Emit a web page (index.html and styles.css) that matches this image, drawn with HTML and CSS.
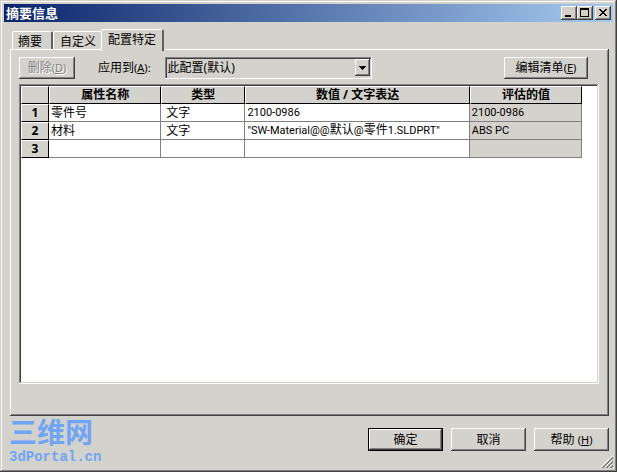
FILE: index.html
```html
<!DOCTYPE html>
<html lang="zh-CN">
<head>
    <meta charset="UTF-8">
    <meta name="viewport" content="width=device-width, initial-scale=1.0">
    <title>摘要信息</title>
    <link rel="stylesheet" href="styles.css">
</head>
<body>

    <div class="window">
        <!-- TITLE BAR -->
        <header class="titlebar">
            <h1>摘要信息</h1>
            <button class="title-btn" aria-label="最小化">
                <svg width="12" height="10" shape-rendering="crispEdges"><path d="M2 7h6v2H2z"/></svg>
            </button>
            <button class="title-btn" aria-label="最大化">
                <svg width="12" height="10" shape-rendering="crispEdges"><path d="M1 0h9v9H1zM2 2v6h7V2z" fill-rule="evenodd"/></svg>
            </button>
            <button class="title-btn close-btn" aria-label="关闭">
                <svg width="12" height="10" shape-rendering="crispEdges"><path d="M2 1h2v1h1v1h2V2h1V1h2v1H9v1H8v1H7v1h1v1h1v1h1v1H8V7H7V6H5v1H4v1H2V7h1V6h1V5h1V4H4V3H3V2H2z"/></svg>
            </button>
        </header>

        <!-- TABS -->
        <div class="tabs" role="tablist">
            <button class="tab" role="tab">摘要</button>
            <button class="tab" role="tab">自定义</button>
            <button class="tab active" role="tab" aria-selected="true">配置特定</button>
        </div>

        <main class="panel">
            <div class="toolbar">
                <button class="btn delete-btn" disabled>删除<span class="key">(<u>D</u>)</span></button>
                <label for="config">应用到<span class="key">(<u>A</u>):</span></label>
                <div class="combo">
                    <select id="config">
                        <option>此配置(默认)</option>
                    </select>
                    <span class="combo-arrow">
                        <svg width="7" height="4" shape-rendering="crispEdges"><path d="M0 0h7v1H6v1H5v1H4v1H3V3H2V2H1V1H0z"/></svg>
                    </span>
                </div>
                <button class="btn edit-btn">编辑清单<span class="key">(<u>E</u>)</span></button>
            </div>

            <div class="grid-box">
                <table>
                    <colgroup>
                        <col class="col-num">
                        <col class="col-name">
                        <col class="col-type">
                        <col class="col-value">
                        <col class="col-result">
                    </colgroup>
                    <thead>
                        <tr><th></th><th>属性名称</th><th>类型</th><th>数值 / 文字表达</th><th>评估的值</th></tr>
                    </thead>
                    <tbody>
                        <tr>
                            <th>1</th><td>零件号</td><td class="type">文字</td>
                            <td><span class="latin">2100-0986</span></td>
                            <td class="result"><span class="latin">2100-0986</span></td>
                        </tr>
                        <tr>
                            <th>2</th><td>材料</td><td class="type">文字</td>
                            <td><span class="latin">"SW-Material@@</span>默认<span class="latin">@</span>零件<span class="latin">1.SLDPRT"</span></td>
                            <td class="result"><span class="latin">ABS PC</span></td>
                        </tr>
                        <tr><th>3</th><td></td><td class="type"></td><td></td><td class="result"></td></tr>
                    </tbody>
                </table>
            </div>
        </main>

        <!-- LOGO AND DIALOG BUTTONS -->
        <footer class="footer">
            <div class="logo">
                <span class="logo-name">三维网</span>
                <span class="logo-url">3dPortal.cn</span>
            </div>
            <button class="btn dialog-btn default-btn">确定</button>
            <button class="btn dialog-btn">取消</button>
            <button class="btn dialog-btn">帮助 <span class="key">(<u>H</u>)</span></button>
        </footer>

        <svg class="grip" width="12" height="12" shape-rendering="crispEdges">
            <path d="M0 11L11 0M4 11L11 4M8 11L11 8" stroke="#fff"/>
            <path d="M1 12L12 1M2 12L12 2M5 12L12 5M6 12L12 6M9 12L12 9M10 12L12 10" stroke="#808080"/>
        </svg>
    </div>

</body>
</html>
```

FILE: styles.css
```css
* { margin: 0; padding: 0; box-sizing: border-box; }

body {
    background: #d4d0c8;
    color: #000;
    font-family: "Noto Sans", "Noto Sans CJK SC", sans-serif;
    font-size: 12px;
    line-height: 16px;
}

button, select {
    font: inherit;
    color: inherit;
}

.window {
    position: relative;
    display: flex;
    flex-direction: column;
    min-height: 100vh;
    padding: 4px;
    background: #d4d2cc;
    box-shadow: inset -1px -1px #404040, inset 1px 1px #d4d0c8, inset -2px -2px #808080, inset 2px 2px #fff;
}

/* Title bar */
.titlebar {
    display: flex;
    align-items: center;
    height: 18px;
    padding: 0 2px;
    background: linear-gradient(to right, #0a246a, #a6caf0);
}

h1 {
    flex: 1;
    font-size: 13px;
    line-height: 18px;
    font-weight: bold;
    color: #fff;
}

.title-btn {
    display: flex;
    width: 16px;
    height: 14px;
    padding: 2px;
    border: none;
    background: #d4d0c8;
    box-shadow: inset -1px -1px #404040, inset 1px 1px #fff, inset -2px -2px #808080;
}

.close-btn { margin-left: 2px; }

/* Tabs */
.tabs {
    display: flex;
    align-items: flex-end;
    height: 28px;
    padding: 0 8px;
}

.tab {
    height: 19px;
    padding: 2px 9px 0 5px;
    line-height: 16px;
    border: solid;
    border-width: 1px 2px 0 1px;
    border-color: #fff #606060 #fff #fff;
    border-radius: 2px 2px 0 0;
    background: #d4d2cc;
}

.tab:nth-child(2) {
    padding: 2px 5px 0 6px;
    border-right: none;
}

.tab.active {
    z-index: 1;
    height: 22px;
    padding: 0 6px 2px;
    margin-bottom: -1px;
}

.panel {
    flex: 1;
    display: flex;
    flex-direction: column;
    margin: -1px 4px 0 6px;
    padding: 8px 10px 32px 9px;
    box-shadow: inset -1px -1px #404040, inset 1px 1px #fff, inset -2px -2px #808080;
}

/* Buttons */
.btn {
    height: 22px;
    border: none;
    background: #d4d2cc;
    box-shadow: inset -1px -1px #404040, inset 1px 1px #fff, inset -2px -2px #808080;
}

.btn:disabled {
    color: #808080;
    text-shadow: 1px 1px #fff;
}

.key, .latin { font-size: 11px; }

.latin { font-family: Roboto, sans-serif; }

.toolbar {
    display: flex;
    align-items: center;
    margin-bottom: 5px;
}

.delete-btn { width: 56px; margin-right: 23px; }
.edit-btn { width: 84px; margin: 0 11px 0 auto; }

.combo {
    position: relative;
    width: 207px;
    margin-left: 14px;
}

select {
    display: block;
    appearance: none;
    width: 100%;
    height: 22px;
    padding: 0 20px 0 3px;
    border: none;
    border-radius: 0;
    background: transparent;
    box-shadow: inset -1px -1px #fff, inset 1px 1px #808080, inset 2px 2px #404040;
}

.combo-arrow {
    position: absolute;
    top: 2px;
    right: 2px;
    display: flex;
    align-items: center;
    justify-content: center;
    width: 15px;
    height: 17px;
    background: #d4d2cc;
    box-shadow: inset -1px -1px #404040, inset 1px 1px #fff, inset -2px -2px #808080;
    pointer-events: none;
}

/* Property table */
.grid-box {
    flex: 1;
    padding: 2px;
    background: #fff;
    box-shadow: inset -1px -1px #fff, inset 1px 1px #808080, inset -2px -2px #d4d0c8, inset 2px 2px #404040;
}

table {
    width: 561px;
    max-width: 100%;
    table-layout: fixed;
    border-collapse: separate;
    border-spacing: 0;
}

.col-num { width: 5%; }
.col-name { width: 20%; }
.col-type { width: 15%; }
.col-value { width: 40%; }
.col-result { width: 20%; }

th, td {
    height: 18px;
    line-height: 16px;
    white-space: nowrap;
}

th {
    background: #d4d2cc;
    border: 1px solid #fff;
    border-right-color: #000;
    border-bottom-color: #000;
    font-weight: bold;
    text-align: center;
}

td {
    padding: 0 2px;
    border-right: 1px solid #808080;
    border-bottom: 1px solid #808080;
    text-align: left;
}

.type { padding-left: 5px; }
.result { background: #d4d2cc; }

/* Footer */
.footer {
    display: flex;
    align-items: flex-start;
    gap: 8px;
    height: 52px;
    padding: 12px 4px 0;
}

.logo {
    display: flex;
    flex-direction: column;
    margin: -12px auto 0 1px;
    color: #70a4f4;
    font-weight: bold;
}

.logo-name {
    font-family: "Noto Sans CJK SC", sans-serif;
    font-size: 28px;
    line-height: 30px;
}

.logo-url {
    font-family: "Liberation Mono", monospace;
    font-size: 14px;
    line-height: 22px;
}

.dialog-btn {
    width: 75px;
    height: 23px;
}

.default-btn {
    border: 1px solid #000;
}

.grip {
    position: absolute;
    right: 4px;
    bottom: 4px;
}
```
